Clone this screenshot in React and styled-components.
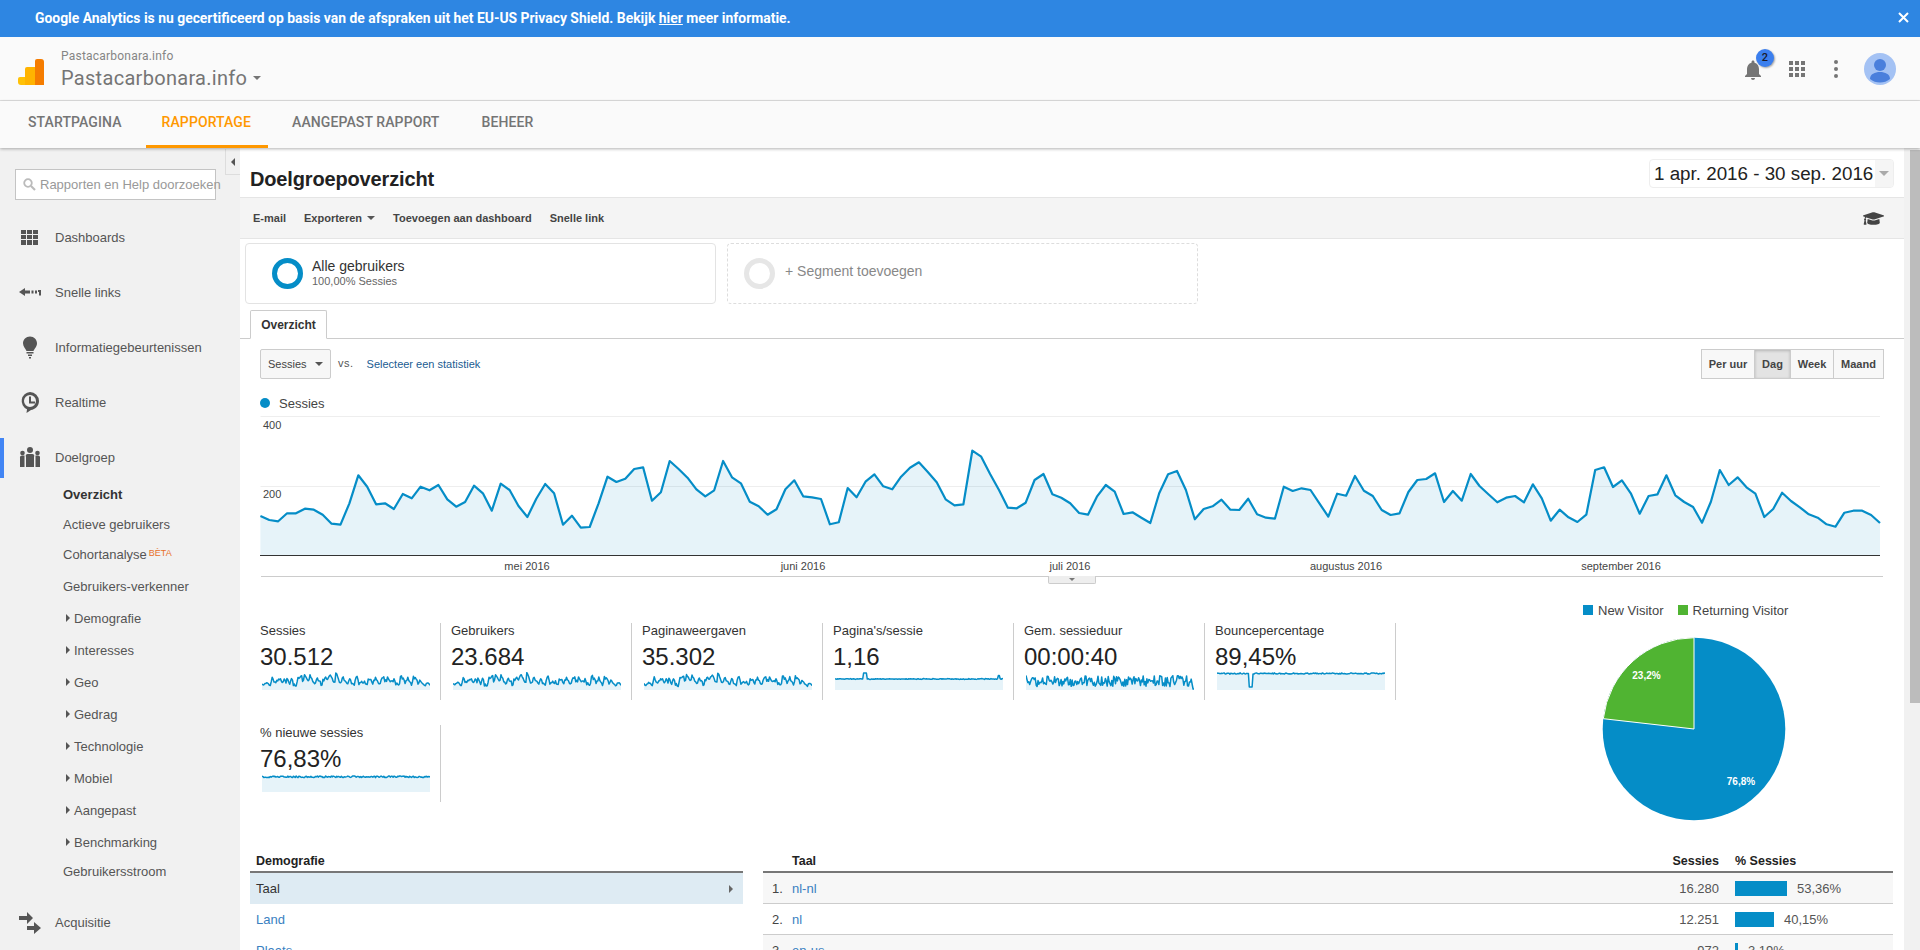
import React from "react";
import styled, { createGlobalStyle } from "styled-components";
import { FaGraduationCap } from "react-icons/fa";
import { MdNotifications } from "react-icons/md";

const Global = createGlobalStyle`
  * { box-sizing: border-box; }
  html, body { margin: 0; padding: 0; height: 950px; overflow: hidden; background: #fff; }
  body { font-family: "Liberation Sans", Arial, sans-serif; font-size: 13px; color: #333; }
`;

const Page = styled.div`width: 1920px; height: 950px; overflow: hidden; display: flex; flex-direction: column;`;

const Banner = styled.div`
  height: 37px; flex: none; background: #2e86e2; color: #fff; display: flex; align-items: center;
  justify-content: space-between; padding: 0 11px 1px 35px;
  font: 700 13.9px Roboto, sans-serif;
  a { color: #fff; text-decoration: underline; }
`;
const CloseIcon = styled.svg`width: 11px; height: 11px; display: block; margin-top: -2px;`;

const Header = styled.header`
  height: 64px; flex: none; background: #fafafa; border-bottom: 1px solid #e0e0e0; display: flex; align-items: center;
  padding: 0 24px 0 18px; justify-content: space-between;
`;
const Brand = styled.div`display: flex; align-items: center; gap: 17px;`;
const Logo = styled.svg`width: 26px; height: 26px; display: block; margin-top: 6px;`;
const BrandText = styled.div`display: flex; flex-direction: column; font-family: Roboto, sans-serif; color: #757575; padding-top: 3px;`;
const BrandSmall = styled.div`font-size: 12px; line-height: 14px; letter-spacing: .22px; color: #858585;`;
const BrandLarge = styled.div`
  font-size: 20px; line-height: 26px; margin-top: 2px; letter-spacing: .3px; display: flex; align-items: center; gap: 6px;
`;
const Caret = styled.span`
  width: 0; height: 0; border-left: ${p => p.$s || 4}px solid transparent; border-right: ${p => p.$s || 4}px solid transparent;
  border-top: ${p => p.$s || 4}px solid ${p => p.$c || "#757575"}; display: inline-block;
`;
const HeaderIcons = styled.div`display: flex; align-items: center;`;
const BellWrap = styled.div`position: relative; width: 28px; height: 24px; margin-right: 20px; color: #757575; margin-top: 2px;`;
const Badge = styled.span`
  position: absolute; left: 15px; top: -9px; width: 18px; height: 18px; border-radius: 50%; background: #3b7fee;
  box-shadow: 1px 1px 2px rgba(0,0,0,.35); color: #1a1a2a; font: 500 11px/17px Roboto, sans-serif; text-align: center;
`;
const Grid9 = styled.div`display: grid; grid-template-columns: repeat(3, 4px); gap: 2px; margin-right: 29px;`;
const GridDot = styled.span`width: 4px; height: 4px; background: #757575;`;
const Kebab = styled.div`display: flex; flex-direction: column; gap: 3px; margin-right: 26px;`;
const KebabDot = styled.span`width: 4px; height: 4px; border-radius: 50%; background: #757575;`;
const Avatar = styled.svg`width: 32px; height: 32px; display: block;`;

const TopNav = styled.nav`
  height: 47px; flex: none; background: #fafafa; display: flex; padding-left: 10px; position: relative; z-index: 2;
  box-shadow: 0 1px 3px rgba(0,0,0,.3);
`;
const TopTab = styled.a`
  height: 47px; padding: 0 18px 2px; display: flex; align-items: center; font: 500 14px Roboto, sans-serif; letter-spacing: .1px;
  color: ${p => p.$on ? "#ff9800" : "#757575"}; border-bottom: 3px solid ${p => p.$on ? "#ff9800" : "transparent"};
  margin-right: 6px; padding-left: ${p => p.$on ? "16px" : "18px"}; padding-right: ${p => p.$on ? "17px" : "18px"};
`;

const Body = styled.div`flex: 1; display: flex; min-height: 0;`;
const Sidebar = styled.aside`width: 240px; flex: none; background: #f1f1f1; position: relative; padding-top: 21px;`;
const Collapse = styled.div`
  position: absolute; right: 0; top: 1px; width: 15px; height: 26px; border-left: 1px solid #ddd; border-bottom: 1px solid #ddd;
  background: #f1f1f1; display: flex; align-items: center; justify-content: center;
  &::before { content: ""; border-right: 4px solid #555; border-top: 4px solid transparent; border-bottom: 4px solid transparent; }
`;
const Search = styled.div`
  margin-left: 15px; width: 201px; height: 31px; background: #fff; border: 1px solid #c4c4c4; display: flex; align-items: center;
  padding-left: 7px; gap: 4px; color: #999; font-size: 13px; white-space: nowrap; margin-bottom: 17px;
`;
const SearchIcon = styled.svg`width: 13px; height: 13px; flex: none;`;
const NavItem = styled.div`
  height: 40px; display: flex; align-items: center; position: relative; padding-left: 55px; color: #555; font-size: 13px;
  margin-bottom: ${p => p.$active ? 2 : 15}px; margin-top: ${p => p.$mt || 0}px;
  ${p => p.$active && `&::before { content: ""; position: absolute; left: 0; top: 1px; bottom: -1px; width: 4px; background: #4285f4; }`}
`;
const NavIcon = styled.svg`position: absolute; left: 18px; top: 8px; width: 24px; height: 24px; color: #555; fill: currentColor;`;
const SubItem = styled.div`
  height: ${p => p.$h || 30}px; display: flex; align-items: center; padding-left: ${p => p.$arrow ? 66 : 63}px;
  color: ${p => p.$on ? "#333" : "#555"}; font-weight: ${p => p.$on ? 700 : 400}; font-size: 13px;
  ${p => p.$arrow && `&::before { content: ""; border-left: 4px solid #555; border-top: 4px solid transparent; border-bottom: 4px solid transparent; margin-right: 4px; }`}
`;
const Beta = styled.sup`color: #e8702a; font-size: 9px; margin-left: 2px; line-height: 0; position: relative; top: -2px; vertical-align: 5px;`;

const Main = styled.main`width: 1664px; flex: none; background: #fff; min-height: 0; overflow: hidden;`;
const Track = styled.div`flex: 1; background: #f1f1f1; padding: 2px 0 0 6px;`;
const Thumb = styled.div`width: 10px; height: 553px; background: #bcbcbc;`;

const TitleBar = styled.div`height: 49px; display: flex; justify-content: space-between; padding: 11px 10px 0 10px;`;
const Title = styled.h1`font: 700 20px/40px "Liberation Sans", sans-serif; letter-spacing: -.15px; color: #222; margin: 0;`;
const DateBox = styled.div`
  height: 29px; width: 245px; border: 1px solid #eee; border-radius: 4px; display: flex; align-items: center; justify-content: space-between;
  font-size: 18.8px; color: #222; padding-left: 4px; overflow: hidden; white-space: nowrap;
`;
const DateArrow = styled.span`
  width: 18px; height: 100%; background: #f5f5f5; display: flex; align-items: center; justify-content: center; flex: none;
`;
const Toolbar = styled.div`
  height: 42px; background: #f4f4f4; border-top: 1px solid #e5e5e5; border-bottom: 1px solid #e5e5e5; display: flex; align-items: center;
  padding: 0 20px 0 13px; gap: 18px; font-weight: 700; font-size: 11px; color: #444;
`;
const ToolItem = styled.span`display: inline-flex; align-items: center; gap: 5px;`;
const CapWrap = styled.span`margin-left: auto; color: #444; font-size: 21px; display: flex;`;
const Segments = styled.div`display: flex; gap: 11px; padding: 4px 0 0 5px;`;
const SegCard = styled.div`
  width: 471px; height: 61px; border: 1px ${p => p.$dashed ? "dashed #ddd" : "solid #e3e3e3"}; border-radius: 4px; display: flex; align-items: center;
  padding-left: ${p => p.$dashed ? 16 : 26}px; gap: ${p => p.$dashed ? 10 : 9}px;
`;
const SegRing = styled.div`width: 31px; height: 31px; border-radius: 50%; border: 5px solid ${p => p.$c};`;
const SegName = styled.div`font-size: 14px; color: #333; line-height: 16px; margin-top: -1px;`;
const SegSub = styled.div`font-size: 11px; color: #666; line-height: 14px;`;
const SegAdd = styled.div`font-size: 14px; color: #888; margin-top: -6px;`;
const TabRow = styled.div`margin-top: 6px; border-bottom: 1px solid #ccc; height: 29px; padding-left: 10px;`;
const Tab = styled.div`
  width: 77px; height: 29px; border: 1px solid #ccc; border-bottom: 1px solid #fff; background: #fff; border-radius: 2px 2px 0 0;
  font-weight: 700; font-size: 12px; color: #333; display: flex; align-items: center; justify-content: center;
`;
const ControlRow = styled.div`display: flex; align-items: center; padding: 10px 20px 0 20px; height: 40px;`;
const SelectBox = styled.div`
  width: 71px; height: 30px; border: 1px solid #ccc; border-radius: 2px; background: #f7f7f7; display: flex; align-items: center; justify-content: space-between;
  padding: 0 7px; font-size: 11px; color: #444;
`;
const Vs = styled.span`font-size: 11px; color: #555; margin: -3px 13px 0 7px; letter-spacing: .5px;`;
const Metric = styled.a`font-size: 11px; color: #1b5c92;`;
const BtnGroup = styled.div`display: flex; margin-left: auto;`;
const Btn = styled.div`
  height: 30px; width: ${p => p.$w}px; border: 1px solid #ccc; margin-left: -1px; display: flex; align-items: center; justify-content: center;
  font-weight: 700; font-size: 11px; color: #444; background: ${p => p.$on ? "#e3e3e3" : "#f8f8f8"};
  ${p => p.$on && "box-shadow: inset 0 1px 3px rgba(0,0,0,.2);"}
`;
const ChartLegend = styled.div`
  margin: 17px 0 0 20px; height: 14px; display: flex; align-items: center; gap: 9px; font-size: 13px; color: #444;
`;
const Dot = styled.span`width: 10px; height: 10px; border-radius: 50%; background: #058dc7;`;
const ChartWrap = styled.div`margin: 5px 0 0 20px; width: 1624px; height: 170px; position: relative;`;
const ChartSvg = styled.svg`
  display: block; width: 1624px; height: 170px;
  text { font: 11px "Liberation Sans", sans-serif; fill: #444; }
`;
const Handle = styled.div`
  position: absolute; left: 788px; top: 161px; width: 48px; height: 8px; background: #eee; border: 1px solid #ccc; border-top: 0; border-radius: 0 0 2px 2px;
  display: flex; align-items: center; justify-content: center;
`;

const MetricsArea = styled.section`display: flex; margin-top: 18px; height: 245px;`;
const Cards = styled.div`width: 1156px; padding: 20px 0 0 10px; display: flex; flex-wrap: wrap; align-content: flex-start; flex: none;`;
const Card = styled.div`width: 191px; height: 77px; border-right: 1px solid #ccc; padding-left: 10px; margin-bottom: 25px;`;
const CardLabel = styled.div`font-size: 13px; line-height: 15px; color: #333;`;
const CardValue = styled.div`font-size: 24px; line-height: 28px; color: #222; margin-top: 5px;`;
const Spark = styled.svg`display: block; width: 168px; height: 18px; margin: 1px 0 0 2px;`;
const PieCol = styled.div`flex: 1; position: relative; display: flex; flex-direction: column;`;
const PieLegend = styled.div`display: flex; padding-left: 187px; font-size: 13px; color: #444; height: 14px; align-items: center;`;
const LegendSq = styled.span`width: 10px; height: 10px; background: ${p => p.$c}; margin-right: 5px; flex: none;`;
const LegendTxt = styled.span`margin-right: 14px;`;
const PieSvg = styled.svg`
  display: block; width: 200px; height: 200px; margin: 12px 0 0 198px;
  text { font: 700 10px "Liberation Sans", sans-serif; fill: #fff; }
`;

const Tables = styled.section`display: flex; gap: 20px; padding: 3px 11px 0 10px;`;
const LeftT = styled.div`width: 493px; flex: none;`;
const RightT = styled.div`flex: 1;`;
const THead = styled.div`
  height: 22px; border-bottom: 2px solid #777; font-weight: 700; font-size: 12.5px; color: #222;
  display: grid; grid-template-columns: ${p => p.$cols || "1fr"}; align-items: center; padding-left: ${p => p.$pl || 0}px; padding-bottom: 1px;
`;
const LeftRow = styled.div`
  height: 31px; display: flex; align-items: center; justify-content: space-between; padding: 0 10px 0 6px; font-size: 13px;
  background: ${p => p.$on ? "#deebf3" : "transparent"}; color: ${p => p.$on ? "#333" : "#3a7fc1"};
`;
const RowArrow = styled.span`border-left: 4px solid #666; border-top: 4px solid transparent; border-bottom: 4px solid transparent;`;
const DataRow = styled.div`
  height: 31px; display: grid; grid-template-columns: 29px 1fr 126px 158px; align-items: center; font-size: 13px; color: #555;
  background: ${p => p.$odd ? "#f7f7f7" : "#fff"}; border-bottom: 1px solid #ccc;
`;
const RowNum = styled.span`padding-left: 9px; color: #444;`;
const RowLink = styled.a`color: #3a7fc1;`;
const RowVal = styled.span`text-align: right; padding-right: 16px;`;
const HeadRight = styled.span`text-align: right; padding-right: 16px;`;
const PctCell = styled.div`display: flex; align-items: center; gap: 10px;`;
const PctBar = styled.span`height: 15px; background: #058dc7; display: block; flex: none;`;

/* ---------- data ---------- */
const Z = [348,360,364,340,340,326,329,344,371,374,310,226,260,313,310,327,282,295,260,271,255,298,320,306,257,280,332,251,270,318,351,296,252,280,374,347,383,381,310,230,246,236,207,202,302,277,183,207,233,268,289,271,183,232,250,305,319,344,328,268,241,289,292,297,373,367,264,292,245,223,
259,268,230,203,187,216,247,298,316,313,152,170,222,270,323,325,308,240,222,283,293,310,339,344,290,255,275,342,337,353,369,280,223,213,270,358,327,319,299,329,330,296,343,353,356,260,273,265,270,310,350,281,287,228,272,288,330,345,340,276,240,237,220,306,273,302,222,258,283,307,293,288,
307,253,295,362,329,352,366,344,210,202,261,241,280,341,288,283,226,286,306,321,368,305,210,255,232,262,281,351,327,278,303,322,343,353,373,380,338,332,332,345,369];

const X0 = 0.4, STEP = (1880 - 260.4) / (Z.length - 1);
const chartPts = Z.map((z, i) => [X0 + i * STEP, 400 + z / 3 - 415]);
const toPath = pts => pts.map((p, i) => `${i ? "L" : "M"}${p[0].toFixed(1)} ${p[1].toFixed(1)}`).join("");

function rng(seed) { let s = seed; return () => (s = (s * 16807) % 2147483647) / 2147483647; }
const sparkFrom = (fn, n = 183) => Array.from({ length: n }, (_, i) => [i * 168 / (n - 1), fn(i / (n - 1), i)]);
const seriesSpark = (seed, amp) => { const r = rng(seed); return sparkFrom((t, i) => 1 + (Z[i] - 152) / 231 * 13 + (r() - .5) * amp); };
const flatSpark = (seed, base, amp, mods) => { const r = rng(seed); return sparkFrom((t) => { let y = base + (r() - .5) * amp; (mods || []).forEach(m => { const d = Math.abs(t - m.t); if (d < m.w) y = m.y; }); return y; }); };

const cards = [
  { l: "Sessies", v: "30.512", d: seriesSpark(11, 0) },
  { l: "Gebruikers", v: "23.684", d: seriesSpark(23, 1) },
  { l: "Paginaweergaven", v: "35.302", d: seriesSpark(37, 1.2) },
  { l: "Pagina's/sessie", v: "1,16", d: flatSpark(5, 7, .8, [{ t: .18, w: .012, y: 1 }, { t: .975, w: .006, y: 3.5 }]) },
  { l: "Gem. sessieduur", v: "00:00:40", d: flatSpark(71, 9, 11, [{ t: 1, w: .006, y: 17 }]) },
  { l: "Bouncepercentage", v: "89,45%", d: flatSpark(93, 1.5, 1.2, [{ t: .2, w: .012, y: 15 }]) },
  { l: "% nieuwe sessies", v: "76,83%", d: flatSpark(41, 2.8, 1.6) },
];

const sideSubs = ["Demografie", "Interesses", "Geo", "Gedrag", "Technologie", "Mobiel", "Aangepast", "Benchmarking"];

const PIE = { cx: 100, cy: 100, r: 91.3 };
const ang = 0.232 * 2 * Math.PI;
const px = PIE.cx - Math.sin(ang) * PIE.r, py = PIE.cy - Math.cos(ang) * PIE.r;

export default function App() {
  return (
    <Page>
      <Global />
      <Banner>
        <span>Google Analytics is nu gecertificeerd op basis van de afspraken uit het EU-US Privacy Shield. Bekijk <a>hier</a> meer informatie.</span>
        <CloseIcon viewBox="0 0 11 11"><path d="M1 1l9 9M10 1l-9 9" stroke="#fff" strokeWidth="2" /></CloseIcon>
      </Banner>
      <Header>
        <Brand>
          <Logo viewBox="0 0 26 26">
            <path d="M2 18h8v8H3a3 3 0 0 1-3-3v-3a2 2 0 0 1 2-2z" fill="#ffc107" />
            <path d="M9 8h9v18H7V10a2 2 0 0 1 2-2z" fill="#ffb300" />
            <path d="M19 0h4a3 3 0 0 1 3 3v23h-9V2a2 2 0 0 1 2-2z" fill="#f57c00" />
          </Logo>
          <BrandText>
            <BrandSmall>Pastacarbonara.info</BrandSmall>
            <BrandLarge>Pastacarbonara.info <Caret /></BrandLarge>
          </BrandText>
        </Brand>
        <HeaderIcons>
          <BellWrap>
            <MdNotifications size={24} />
            <Badge>2</Badge>
          </BellWrap>
          <Grid9>{Array.from({ length: 9 }, (_, i) => <GridDot key={i} />)}</Grid9>
          <Kebab><KebabDot /><KebabDot /><KebabDot /></Kebab>
          <Avatar viewBox="0 0 32 32">
            <circle cx="16" cy="16" r="16" fill="#a4c2f4" />
            <circle cx="16" cy="12" r="6" fill="#4a7fdc" />
            <path d="M6 26c0-5 5-7 10-7s10 2 10 7a16 16 0 0 1-20 0z" fill="#4a7fdc" />
          </Avatar>
        </HeaderIcons>
      </Header>
      <TopNav>
        <TopTab>STARTPAGINA</TopTab>
        <TopTab $on>RAPPORTAGE</TopTab>
        <TopTab>AANGEPAST RAPPORT</TopTab>
        <TopTab>BEHEER</TopTab>
      </TopNav>
      <Body>
        <Sidebar>
          <Collapse />
          <Search>
            <SearchIcon viewBox="0 0 13 13"><circle cx="5" cy="5" r="3.8" fill="none" stroke="#bbb" strokeWidth="1.8" /><path d="M8 8l4 4" stroke="#bbb" strokeWidth="2.2" /></SearchIcon>
            Rapporten en Help doorzoeken
          </Search>
          <NavItem>
            <NavIcon viewBox="0 0 24 24"><path d="M3 5h5v4H3zM9 5h5v4H9zM15 5h5v4h-5zM3 10h5v4H3zM9 10h5v4H9zM15 10h5v4h-5zM3 15h5v5H3zM9 15h5v5H9zM15 15h5v5h-5z" /></NavIcon>
            Dashboards
          </NavItem>
          <NavItem>
            <NavIcon viewBox="0 0 24 24"><path d="M1 12l6-4v2.500h5v3H7V16zM13.500 10.500h2v3h-2zM17 10.500h2v3h-2zM20 10h3v5.500h-2V12h-1z" /></NavIcon>
            Snelle links
          </NavItem>
          <NavItem>
            <NavIcon viewBox="0 0 24 24"><path d="M12 1.500c4 0 7 3 7 6.800 0 3.500-2.500 5.200-3.500 7.700h-7C7.500 13.500 5 11.800 5 8.300c0-3.800 3-6.800 7-6.800zM8.500 17h7v1.500h-7zM10 19.500h4V21h-4zM11 22h2v1.500h-2z" /></NavIcon>
            Informatiegebeurtenissen
          </NavItem>
          <NavItem>
            <NavIcon viewBox="0 0 24 24"><path fillRule="evenodd" d="M12 2a9 9 0 0 1 9 9c0 5-4 8.500-8 9l-4.500 3 .5-3.800A9 9 0 0 1 12 2zm0 3a6 6 0 1 0 0 12 6 6 0 0 0 0-12z" /><path d="M11 6.500h2v5h4v2h-6z" /></NavIcon>
            Realtime
          </NavItem>
          <NavItem $active>
            <NavIcon viewBox="0 0 24 24"><circle cx="12" cy="5" r="3" /><circle cx="4.500" cy="8" r="2.300" /><circle cx="19.500" cy="8" r="2.300" /><path d="M8 12a2 2 0 0 1 2-3h4a2 2 0 0 1 2 3v10H8zM2 13a2 2 0 0 1 2-2.500h2.500V22H2zM17.500 10.500H20a2 2 0 0 1 2 2.500v9h-4.500z" /></NavIcon>
            Doelgroep
          </NavItem>
          <SubItem $on>Overzicht</SubItem>
          <SubItem>Actieve gebruikers</SubItem>
          <SubItem $h={31}>Cohortanalyse<Beta>BÈTA</Beta></SubItem>
          <SubItem $h={32}>Gebruikers-verkenner</SubItem>
          {sideSubs.map(s => <SubItem key={s} $arrow $h={32}>{s}</SubItem>)}
          <SubItem $h={27}>Gebruikersstroom</SubItem>
          <NavItem $mt={17}>
            <NavIcon viewBox="0 0 24 24"><path d="M1 6h8V2l6 6-6 6v-4H1zM9 16h7v-4l7 6-7 6v-4H9z" /></NavIcon>
            Acquisitie
          </NavItem>
        </Sidebar>
        <Main>
          <TitleBar>
            <Title>Doelgroepoverzicht</Title>
            <DateBox>1 apr. 2016 - 30 sep. 2016<DateArrow><Caret $s={5} $c="#aaa" /></DateArrow></DateBox>
          </TitleBar>
          <Toolbar>
            <ToolItem>E-mail</ToolItem>
            <ToolItem>Exporteren <Caret $s={4} $c="#555" /></ToolItem>
            <ToolItem>Toevoegen aan dashboard</ToolItem>
            <ToolItem>Snelle link</ToolItem>
            <CapWrap><FaGraduationCap /></CapWrap>
          </Toolbar>
          <Segments>
            <SegCard>
              <SegRing $c="#058dc7" />
              <div>
                <SegName>Alle gebruikers</SegName>
                <SegSub>100,00% Sessies</SegSub>
              </div>
            </SegCard>
            <SegCard $dashed>
              <SegRing $c="#e6e6e6" />
              <SegAdd>+ Segment toevoegen</SegAdd>
            </SegCard>
          </Segments>
          <TabRow><Tab>Overzicht</Tab></TabRow>
          <ControlRow>
            <SelectBox>Sessies <Caret $s={4} $c="#555" /></SelectBox>
            <Vs>vs.</Vs>
            <Metric>Selecteer een statistiek</Metric>
            <BtnGroup>
              <Btn $w={54}>Per uur</Btn>
              <Btn $w={37} $on>Dag</Btn>
              <Btn $w={44}>Week</Btn>
              <Btn $w={51}>Maand</Btn>
            </BtnGroup>
          </ControlRow>
          <ChartLegend><Dot />Sessies</ChartLegend>
          <ChartWrap>
            <ChartSvg viewBox="0 0 1624 170">
              <path d="M0.500 1.500H1620M0.500 71.500H1620" stroke="#eee" strokeWidth="1" />
              <path d={`${toPath(chartPts)}L${chartPts[182][0]} 140L${X0} 140Z`} fill="#058dc7" fillOpacity=".1" />
              <path d={toPath(chartPts)} fill="none" stroke="#058dc7" strokeWidth="2.200" strokeLinejoin="round" />
              <path d="M0 140.500H1620" stroke="#333" strokeWidth="1" />
              <path d="M1 161.500H1623" stroke="#ccc" strokeWidth="1" />
              <text x="3" y="14">400</text>
              <text x="3" y="83">200</text>
              <text x="267" y="155" textAnchor="middle">mei 2016</text>
              <text x="543" y="155" textAnchor="middle">juni 2016</text>
              <text x="810" y="155" textAnchor="middle">juli 2016</text>
              <text x="1086" y="155" textAnchor="middle">augustus 2016</text>
              <text x="1361" y="155" textAnchor="middle">september 2016</text>
            </ChartSvg>
            <Handle><Caret $s={3.5} $c="#777" /></Handle>
          </ChartWrap>
          <MetricsArea>
            <Cards>
              {cards.map(c => (
                <Card key={c.l}>
                  <CardLabel>{c.l}</CardLabel>
                  <CardValue>{c.v}</CardValue>
                  <Spark viewBox="0 0 168 18">
                    <path d={`${toPath(c.d)}L168 18L0 18Z`} fill="#058dc7" fillOpacity=".1" />
                    <path d={toPath(c.d)} fill="none" stroke="#058dc7" strokeWidth="1.500" strokeLinejoin="round" />
                  </Spark>
                </Card>
              ))}
            </Cards>
            <PieCol>
              <PieLegend>
                <LegendSq $c="#058dc7" /><LegendTxt>New Visitor</LegendTxt>
                <LegendSq $c="#50b432" /><LegendTxt>Returning Visitor</LegendTxt>
              </PieLegend>
              <PieSvg viewBox="0 0 200 200">
                <circle cx={PIE.cx} cy={PIE.cy} r={PIE.r} fill="#058dc7" />
                <path d={`M${PIE.cx} ${PIE.cy}L${px} ${py}A${PIE.r} ${PIE.r} 0 0 1 ${PIE.cx} ${PIE.cy - PIE.r}Z`} fill="#50b432" stroke="#fff" strokeWidth="1" />
                <text x="52.500" y="50" textAnchor="middle">23,2%</text>
                <text x="147" y="156" textAnchor="middle">76,8%</text>
              </PieSvg>
            </PieCol>
          </MetricsArea>
          <Tables>
            <LeftT>
              <THead $pl={6}>Demografie</THead>
              <LeftRow $on>Taal <RowArrow /></LeftRow>
              <LeftRow>Land</LeftRow>
              <LeftRow>Plaats</LeftRow>
            </LeftT>
            <RightT>
              <THead $cols="29px 1fr 126px 158px">
                <span /><span>Taal</span><HeadRight>Sessies</HeadRight><span>% Sessies</span>
              </THead>
              <DataRow $odd><RowNum>1.</RowNum><RowLink>nl-nl</RowLink><RowVal>16.280</RowVal><PctCell><PctBar style={{ width: 52 }} />53,36%</PctCell></DataRow>
              <DataRow><RowNum>2.</RowNum><RowLink>nl</RowLink><RowVal>12.251</RowVal><PctCell><PctBar style={{ width: 39 }} />40,15%</PctCell></DataRow>
              <DataRow $odd><RowNum>3.</RowNum><RowLink>en-us</RowLink><RowVal>972</RowVal><PctCell><PctBar style={{ width: 3 }} />3,19%</PctCell></DataRow>
            </RightT>
          </Tables>
        </Main>
        <Track><Thumb /></Track>
      </Body>
    </Page>
  );
}
